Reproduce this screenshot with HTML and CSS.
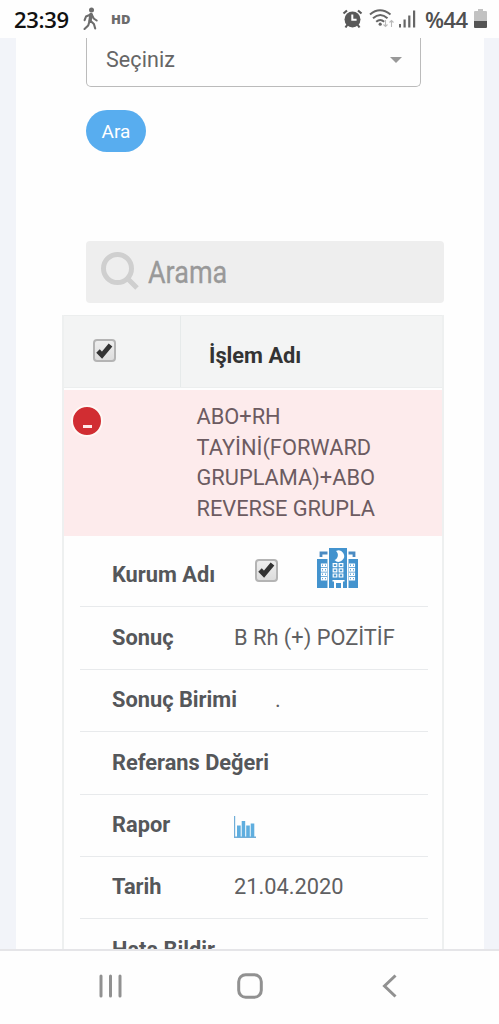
FILE: index.html
```html
<!DOCTYPE html>
<html lang="tr">
<head>
<meta charset="utf-8">
<title>Tahliller</title>
<link rel="stylesheet" href="styles.css">
</head>
<body>
<div class="phone">
  <header class="status">
    <span class="clock">23:39</span>
    <svg class="walker" width="16" height="24" viewBox="0 0 16 24" fill="none" stroke="#6c6c6c" stroke-width="2.1" stroke-linecap="round" stroke-linejoin="round"><circle cx="8.5" cy="3" r="2.5" fill="#6c6c6c" stroke="none"/><path d="M7.700 7.500 3 9.500l-1.400 3.700M8.700 7.500l2 4 3 2"/><path d="M8 7.500 7 14" stroke-width="3.400"/><path d="M6.600 14 5.200 18.500 1.500 22M7.700 14l3.200 3 1.300 4.500"/></svg>
    <span class="hd">HD</span>
    <span class="spacer"></span>
    <svg class="alarm" width="21" height="20" viewBox="0 0 21 20" fill="none"><circle cx="10.500" cy="10.400" r="8" fill="#595959"/><path d="m5.500 15.500-2 3M15.500 15.500l2 3M1.500 4.500 5 1.500M19.500 4.500 16 1.500" stroke="#595959" stroke-width="2.200"/><path d="M10.300 5.500v5.300h4.300" stroke="#fff" stroke-width="2"/></svg>
    <svg class="wifi" width="26" height="20" viewBox="0 0 26 20" fill="none" stroke="#666" stroke-width="2"><path d="M1 5.500q9.800-8.400 20.500 0M4 9.300q7.300-6.500 14.500 0M7.200 12.800q4-3.700 8 0"/><circle cx="11.200" cy="15.200" r="1.600" fill="#666" stroke="none"/><path d="M16.500 11v6.500m-2-2 2 2 2-2M22.500 18v-6.500m-2 2 2-2 2 2" stroke="#b9b9b9" stroke-width="1.100"/></svg>
    <svg class="signal" width="18" height="18" viewBox="0 0 18 18" fill="#666"><path d="M1 14h2v3.500H1zM5.500 9.500h2.200v8H5.500zM10.200 5.500h2.200v12h-2.200zM15 .5h2.200v17H15z"/></svg>
    <span class="percent">%44</span>
    <svg class="battery" width="13" height="20" viewBox="0 0 13 20"><path d="M4 0h5v2h3q1 0 1 1v9H0V3q0-1 1-1h3z" fill="#c2c2c2"/><path d="M0 12h13v6q0 1-1 1H1q-1 0-1-1z" fill="#555"/></svg>
  </header>

  <main class="viewport">
    <section class="page">
      <div class="select"><span>Seçiniz</span><i class="caret"></i></div>
      <button class="submit">Ara</button>
      <div class="search">
        <svg width="40" height="40" viewBox="0 0 40 40" fill="none" stroke="#cfcfcf"><circle cx="16.500" cy="16.500" r="14" stroke-width="5"/><path d="m26.500 26.500 9.500 9.500" stroke-width="5"/></svg>
        <span>Arama</span>
      </div>

      <div class="table">
        <div class="thead">
          <div class="th-check"><span class="checkbox"><svg width="17" height="16" viewBox="0 0 17 16" fill="none" stroke="#333" stroke-width="4.800"><path d="m2 8 4 4.200L14.500 2"/></svg></span></div>
          <div class="th-name">İşlem Adı</div>
        </div>
        <div class="parent">
          <span class="collapse"><i></i></span>
          <div class="test-name">ABO+RH<br>TAYİNİ(FORWARD<br>GRUPLAMA)+ABO<br>REVERSE GRUPLA</div>
        </div>
        <ul class="details">
          <li class="institution">
            <b>Kurum Adı</b>
            <span class="checkbox"><svg width="17" height="16" viewBox="0 0 17 16" fill="none" stroke="#333" stroke-width="4.800"><path d="m2 8 4 4.200L14.500 2"/></svg></span>
            <svg class="hospital" width="41" height="40" viewBox="0 0 41 40">
              <path d="M12 0h18v40H12zM0 11h10.500v29H0zM31.500 11H41v29h-9.500z" fill="#4393ce"/>
              <path d="M4 9V5h6.500M37 9V5h-5.500" fill="none" stroke="#4b8bc2" stroke-width="2.800"/>
              <path d="M19 3a5.600 5.600 0 1 1-1.500 9 5.300 5.300 0 0 0 1.500-9z" fill="#fff"/>
              <path d="M17 33h9v7h-2v-5h-5v5h-2zM15.500 32h12v1.500h-12z" fill="#fff"/>
              <g fill="none" stroke="#fff" stroke-width="1.200"><path d="M16.200 15.600h3.600v3h-3.600zM22.200 15.600h3.600v3h-3.600zM16.200 20.800h3.600v3h-3.600zM22.200 20.800h3.600v3h-3.600zM16.200 26h3.600v3h-3.600zM22.200 26h3.600v3h-3.600z"/><path d="M4.500 16h2v2.600h-2zM7.500 16h2v2.600h-2zM4.500 20.500h2v2.600h-2zM7.500 20.500h2v2.600h-2zM4.500 25h2v2.600h-2zM7.500 25h2v2.600h-2zM4.500 29.500h2v2.300h-2zM7.500 29.500h2v2.300h-2zM32.500 16h2v2.600h-2zM35.500 16h2v2.600h-2zM32.500 20.500h2v2.600h-2zM35.500 20.500h2v2.600h-2zM32.500 25h2v2.600h-2zM35.500 25h2v2.600h-2zM32.500 29.500h2v2.300h-2zM35.500 29.500h2v2.300h-2z"/></g>
            </svg>
          </li>
          <li><b>Sonuç</b><span class="result">B Rh (+) POZİTİF</span></li>
          <li><b>Sonuç Birimi</b><span class="unit">.</span></li>
          <li><b>Referans Değeri</b></li>
          <li><b>Rapor</b><svg class="chart" width="22" height="22" viewBox="0 0 22 22"><path d="M.5 0v21.300H22" fill="none" stroke="#71aed8" stroke-width="1.400"/><path d="M3 9.500h3.700V21H3zM7.700 5h3.500v16H7.700zM12.200 9.500h3.600V21h-3.600zM16.700 7.500h3.600V21h-3.600z" fill="#5faedf"/></svg></li>
          <li><b>Tarih</b><span class="date">21.04.2020</span></li>
          <li><b>Hata Bildir</b></li>
        </ul>
      </div>
    </section>
  </main>

  <nav class="navbar">
    <svg width="24" height="24" viewBox="0 0 24 24" stroke="#919191" stroke-width="3" stroke-linecap="round"><path d="M2 2v20M11.500 2v20M21 2v20"/></svg>
    <svg class="home" width="26" height="26" viewBox="0 0 26 26" fill="none" stroke="#919191" stroke-width="3"><rect x="1.700" y="1.700" width="22.600" height="22.600" rx="7"/></svg>
    <svg width="15" height="24" viewBox="0 0 15 24" fill="none" stroke="#919191" stroke-width="3"><path d="M13.500 1.500 2.500 12l11 10.500"/></svg>
  </nav>
</div>
</body>
</html>
```
FILE: styles.css
```css
* { box-sizing: border-box; }
body { margin: 0; font-family: Roboto, "Liberation Sans", sans-serif; color: #555; background: #fefefe; }
svg { display: block; flex: none; }
.phone { width: 499px; height: 1024px; display: flex; flex-direction: column; overflow: hidden; }

.status { height: 38px; flex: none; display: flex; align-items: flex-start; padding: 0 12px 0 14px; background: #fefefe; font-family: "Open Sans", sans-serif; }
.clock { width: 69px; margin-top: 8px; font-size: 22px; line-height: 23px; font-weight: 600; color: #111; letter-spacing: -.3px; }
.walker { margin-top: 7px; }
.hd { margin: 11px 0 0 12px; font-size: 13px; line-height: 16px; font-weight: 800; color: #6c6c6c; }
.spacer { flex: 1; }
.alarm { margin-top: 9px; }
.wifi { margin: 9px 0 0 6px; }
.signal { margin: 10px 0 0 3px; }
.percent { width: 44px; margin: 8px 5px 0 9px; font-size: 22px; line-height: 23px; font-weight: 600; color: #505050; letter-spacing: -.5px; }
.battery { margin: 9px 0 0; }

.viewport { flex: 1; min-height: 0; overflow: hidden; padding: 0 15px 0 16px; background: #f2f4f9; }
.page { height: 100%; overflow: hidden; background: #fefefe; padding: 0 40px 0 46px; }

.select { width: 335px; height: 49px; margin-left: 24px; padding: 0 18px 5px 19px; display: flex; align-items: center; justify-content: space-between; border: 1px solid #bbb; border-top: 0; border-radius: 0 0 5px 5px; font-size: 21.5px; letter-spacing: .1px; color: #666; }
.caret { border: 6px solid transparent; border-top-color: #999; border-bottom: 0; }
.submit { display: block; width: 60px; height: 42px; margin: 23px 0 0 24px; padding: 0; border: 0; border-radius: 21px; background: #58adef; color: #fff; font: 19px Roboto, sans-serif; }
.search { width: 358px; height: 62px; margin: 89px 0 0 24px; padding-left: 15px; display: flex; align-items: center; gap: 7px; background: #eee; border-radius: 4px; color: #999; }
.search span { padding-top: 2px; font-size: 31px; line-height: 36px; transform: scaleX(.87); transform-origin: left; -webkit-text-stroke: .3px #999; }

.table { width: 382px; margin-top: 12px; border: 1px solid #eef0f0; border-width: 0 2px; }
.thead { height: 73px; display: flex; background: #f3f4f4; border: 1px solid #eceeee; border-width: 1px 0; }
.th-check { width: 117px; padding: 23px 0 0 29px; border-right: 1px solid #e6eaea; }
.th-name { padding: 27px 0 0 28px; font-size: 21.8px; line-height: 25px; font-weight: 700; color: #333; }
.checkbox { width: 23px; height: 23px; flex: none; display: grid; place-items: center; border: 2px solid #b4b4b4; border-radius: 4px; background: linear-gradient(#eee, #ddd); }
.parent { height: 146px; margin-top: 2px; padding: 12px 0 0 7px; display: flex; align-items: flex-start; background: #fdebec; }
.collapse { width: 32px; height: 32px; margin-top: 3px; flex: none; display: grid; place-items: end center; padding-bottom: 7px; border: 2px solid #fff8f5; border-radius: 50%; background: #d12d32; }
.collapse i { width: 9px; height: 3px; background: #ffe8e8; }
.test-name { margin-left: 93.5px; font-size: 21.8px; line-height: 30.5px; color: #6c5b61; white-space: nowrap; }

.details { list-style: none; margin: 0; padding: 9px 14px 0 16px; }
.details li { height: 62.4px; display: flex; align-items: center; padding: 0 0 .5px 32px; border-bottom: 1px solid #e8eaec; white-space: nowrap; font-size: 21.8px; line-height: 26px; color: #5f6062; }
.details b { min-width: 122px; color: #55575a; }
.details .institution { padding-bottom: 2px; }
.details .institution b { min-width: 143px; }
.institution .checkbox { margin-bottom: 9px; }
.hospital { margin: 0 0 13px 39px; }
.unit { margin-left: 38px; }
.chart { margin-top: 3px; }

.navbar { height: 75px; flex: none; display: flex; align-items: center; padding: 0 102px 3px 99px; justify-content: space-between; border-top: 2px solid #e5e5e8; background: #fefefe; }
.home { margin-right: 6px; }
```
